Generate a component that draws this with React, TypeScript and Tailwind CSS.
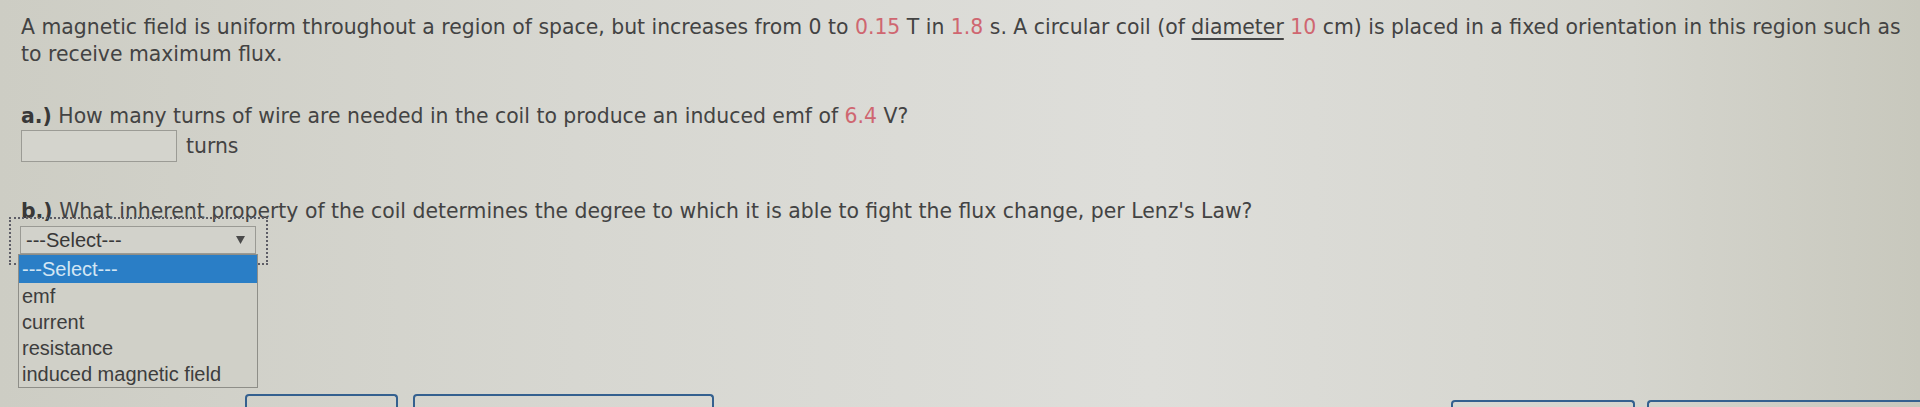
import React from "react";

const options = ["emf", "current", "resistance", "induced magnetic field"];

function Num({ children }: { children: React.ReactNode }) {
  return <span className="text-[#cf6670]">{children}</span>;
}

export default function App() {
  return (
    <div
      className="relative h-[407px] w-[1920px] overflow-hidden bg-[linear-gradient(90deg,#cdcdc4_0%,#d7d7d1_30%,#dededa_60%,#d5d5ce_85%,#c8c8bd_100%)] text-[#434343]"
      style={{ fontFamily: '"DejaVu Sans", Verdana, sans-serif' }}
    >
      <div className="pl-[21px] pt-[14px] text-[20.4px] leading-[27px]">
        <p className="whitespace-nowrap">
          A magnetic field is uniform throughout a region of space, but increases from 0 to <Num>0.15</Num> T in{" "}
          <Num>1.8</Num> s. A circular coil (of <span className="underline underline-offset-4">diameter</span>{" "}
          <Num>10</Num> cm) is placed in a fixed orientation in this region such as
          <br />
          to receive maximum flux.
        </p>

        <p className="mt-[35px] whitespace-nowrap">
          <b className="text-[#383838]">a.)</b> How many turns of wire are needed in the coil to produce an induced emf of{" "}
          <Num>6.4</Num> V?
        </p>
        <div className="flex items-center gap-[9px]">
          <div className="h-[32px] w-[156px] border border-[#9b9b95] bg-[#d4d4cd]" />
          <span>turns</span>
        </div>

        <p className="mt-[36px] whitespace-nowrap">
          <b className="text-[#383838]">b.)</b> What inherent property of the coil determines the degree to which it is able
          to fight the flux change, per Lenz's Law?
        </p>

        <div className="relative -ml-[12px] mt-[-8px] w-[259px] border-2 border-dotted border-[#5d5d66] px-[9px] pb-[9px] pt-[7px]">
          <div
            className="flex h-[28px] w-[236px] items-center justify-between border border-[#9a9a94] bg-[#d2d2cb] pl-[5px] pr-[10px] text-[20px] text-[#383838]"
            style={{ fontFamily: '"Liberation Sans", Arial, sans-serif' }}
          >
            <span>---Select---</span>
            <svg width="9" height="8" viewBox="0 0 9 8">
              <path d="M0 0 L9 0 L4.5 8 Z" fill="#4a4a4a" />
            </svg>
          </div>

          <div
            className="absolute left-[7px] top-[35px] z-10 w-[240px] border border-[#8e8e88] bg-[#d0d0c8] text-[20px] leading-[26px] text-[#3d3d3d]"
            style={{ fontFamily: '"Liberation Sans", Arial, sans-serif' }}
          >
            <div className="h-[28px] bg-[#2a7ec6] pl-[3px] leading-[28px] text-[#d3e6f4]">---Select---</div>
            {options.map((o) => (
              <div key={o} className="pl-[3px]">
                {o}
              </div>
            ))}
          </div>
        </div>
      </div>

      <div className="absolute bottom-0 left-0 right-0 flex items-end">
        <div className="ml-[245px] h-[13px] w-[153px] rounded-t-[4px] border-2 border-b-0 border-[#34608f]" />
        <div className="ml-[15px] h-[13px] w-[301px] rounded-t-[4px] border-2 border-b-0 border-[#34608f]" />
        <div className="ml-[737px] h-[7px] w-[184px] rounded-t-[4px] border-2 border-b-0 border-[#34608f]" />
        <div className="ml-[12px] h-[7px] flex-1 rounded-tl-[4px] border-2 border-b-0 border-r-0 border-[#34608f]" />
      </div>
    </div>
  );
}
